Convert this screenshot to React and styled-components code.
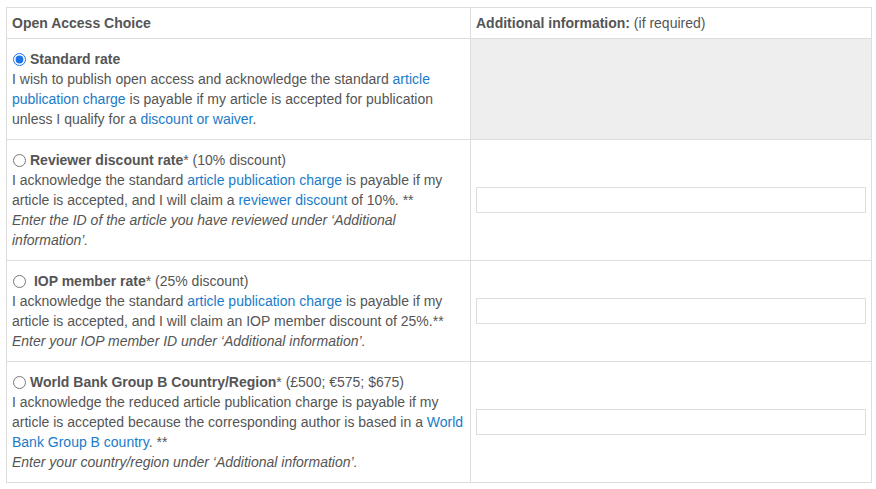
import React from 'react';
import styled, { createGlobalStyle } from 'styled-components';

const GlobalStyle = createGlobalStyle`
    body {
        margin: 0;
        background: #fff;
        font-family: "Liberation Sans", Arial, sans-serif;
        font-size: 14px;
        line-height: 20px;
        color: #555;
    }
`;

const Page = styled.div`
    padding: 7px 0 0 6px;
`;

const Table = styled.table`
    width: 866px;
    border-collapse: collapse;
    border: 1px solid #ddd;
    table-layout: fixed;
`;

const Column = styled.col`
    width: ${props => props.$w}px;
`;

const HeadCell = styled.th`
    text-align: left;
    font-weight: normal;
    padding: 5px 5px;
    border: 1px solid #ddd;
`;

const Strong = styled.b`
    font-weight: bold;
`;

const Cell = styled.td`
    padding: 10px 5px;
    border: 1px solid #ddd;
    vertical-align: ${props => (props.$middle ? 'middle' : 'top')};
    background: ${props => (props.$shaded ? '#eee' : '#fff')};
`;

const Label = styled.label`
    display: flex;
    align-items: center;
`;

const Radio = styled.input`
    width: 13px;
    height: 13px;
    margin: 0 4px 0 1px;
    accent-color: #1a73e8;
`;

const Link = styled.a`
    color: #1a7bc9;
    text-decoration: none;
`;

const Note = styled.em`
    display: block;
    font-style: italic;
`;

const Field = styled.input`
    display: block;
    box-sizing: border-box;
    width: 100%;
    height: 26px;
    border: 1px solid #ddd;
    background: #fff;
    margin: 0;
`;

const apc = <Link href="#">article publication charge</Link>;

export default function App() {
    return (
        <Page>
            <GlobalStyle />
            <Table>
                <colgroup>
                    <Column $w={464} />
                    <Column $w={401} />
                </colgroup>
                <thead>
                    <tr>
                        <HeadCell><Strong>Open Access Choice</Strong></HeadCell>
                        <HeadCell><Strong>Additional information:</Strong> (if required)</HeadCell>
                    </tr>
                </thead>
                <tbody>
                    <tr>
                        <Cell>
                            <Label><Radio type="radio" name="oa" defaultChecked /><Strong>Standard rate</Strong></Label>
                            I wish to publish open access and acknowledge the standard {apc} is payable if my article is accepted for publication unless I qualify for a <Link href="#">discount or waiver</Link>.
                        </Cell>
                        <Cell $shaded />
                    </tr>
                    <tr>
                        <Cell>
                            <Label><Radio type="radio" name="oa" /><Strong>Reviewer discount rate</Strong>*&nbsp;(10% discount)</Label>
                            I acknowledge the standard {apc} is payable if my article is accepted, and I will claim a <Link href="#">reviewer discount</Link> of 10%. **
                            <Note>Enter the ID of the article you have reviewed under ‘Additional information’.</Note>
                        </Cell>
                        <Cell $middle><Field type="text" /></Cell>
                    </tr>
                    <tr>
                        <Cell>
                            <Label><Radio type="radio" name="oa" />&nbsp;<Strong>IOP member rate</Strong>*&nbsp;(25% discount)</Label>
                            I acknowledge the standard {apc} is payable if my article is accepted, and I will claim an IOP member discount of 25%.**
                            <Note>Enter your IOP member ID under ‘Additional information’.</Note>
                        </Cell>
                        <Cell $middle><Field type="text" /></Cell>
                    </tr>
                    <tr>
                        <Cell>
                            <Label><Radio type="radio" name="oa" /><Strong>World Bank Group B Country/Region</Strong>*&nbsp;(£500; €575; $675)</Label>
                            I acknowledge the reduced article publication charge is payable if my article is accepted because the corresponding author is based in a <Link href="#">World Bank Group B country</Link>. **
                            <Note>Enter your country/region under ‘Additional information’.</Note>
                        </Cell>
                        <Cell $middle><Field type="text" /></Cell>
                    </tr>
                </tbody>
            </Table>
        </Page>
    );
}
